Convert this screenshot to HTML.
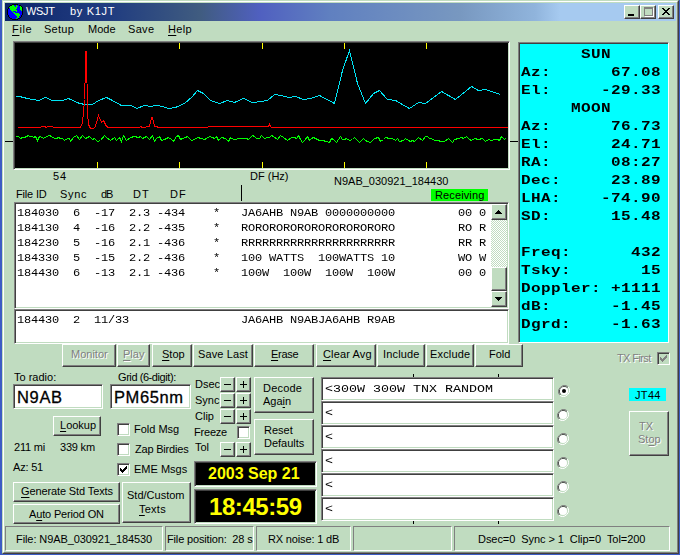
<!DOCTYPE html><html><head><meta charset="utf-8"><style>
html,body{margin:0;padding:0}
body{width:680px;height:555px;overflow:hidden;position:relative;background:#3C5CC4}
.b,.s2,.s1{position:absolute;box-sizing:border-box}
.b{background:#C0DCC0;border:1px solid;border-color:#fff #404040 #404040 #fff;box-shadow:inset -1px -1px #808080}
.s2{border:1px solid;border-color:#808080 #fff #fff #808080;box-shadow:inset 1px 1px #404040,inset -1px -1px #C0DCC0}
.s1{border:1px solid;border-color:#808080 #fff #fff #808080}
.t,.tr16,.tb16,.tb24,.m12,.mb14,.m11{position:absolute;white-space:pre;color:#000}
.t{font:11px/11px "Liberation Sans",sans-serif}
.tr16{font:16.5px/16px "Liberation Sans",sans-serif;-webkit-text-stroke:0.3px #000}
.tb16{font:bold 16px/16px "Liberation Sans",sans-serif}
.tb24{font:bold 24px/24px "Liberation Sans",sans-serif}
.m12{font:12px/12px "Liberation Mono",monospace;letter-spacing:-0.2px;transform:scaleY(0.9);transform-origin:0 0}
.mb14{font:bold 16px/16px "Liberation Mono",monospace;letter-spacing:0.4px;transform:scaleY(0.82);transform-origin:0 0}
.m11{font:13.33px/13px "Liberation Mono",monospace;letter-spacing:0px;transform:scaleY(0.8);transform-origin:0 0}
u{text-decoration:underline;text-underline-offset:2px}
</style></head><body><div style="position:absolute;left:2px;top:0;width:677px;height:554px;box-sizing:border-box;background:#C0DCC0;border:1px solid;border-color:#C0DCC0 #404040 #404040 #C0DCC0"><div style="position:absolute;left:0;top:0;right:0;bottom:0;border:1px solid;border-color:#fff #808080 #808080 #fff"></div></div>
<div style="position:absolute;left:5px;top:3px;width:671px;height:18px;background:linear-gradient(to right,#0A246A 0px,#1A3478 60px,#203C80 105px,#405C80 195px,#5060C0 255px,#6080C0 325px,#7898C0 455px,#90B4DC 530px,#A6CAF0 555px,#A6CAF0 671px)"></div>
<svg style="position:absolute;left:7px;top:4px" width="16" height="16" shape-rendering="crispEdges"><rect x="5" y="0" width="1" height="1" fill="#000"/><rect x="6" y="0" width="1" height="1" fill="#000"/><rect x="7" y="0" width="1" height="1" fill="#000"/><rect x="8" y="0" width="1" height="1" fill="#000"/><rect x="9" y="0" width="1" height="1" fill="#000"/><rect x="10" y="0" width="1" height="1" fill="#000"/><rect x="3" y="1" width="1" height="1" fill="#000"/><rect x="4" y="1" width="1" height="1" fill="#000"/><rect x="5" y="1" width="1" height="1" fill="#00FF00"/><rect x="6" y="1" width="1" height="1" fill="#00FF00"/><rect x="7" y="1" width="1" height="1" fill="#0000FF"/><rect x="8" y="1" width="1" height="1" fill="#0000FF"/><rect x="9" y="1" width="1" height="1" fill="#00FF00"/><rect x="10" y="1" width="1" height="1" fill="#0000FF"/><rect x="11" y="1" width="1" height="1" fill="#0000FF"/><rect x="12" y="1" width="1" height="1" fill="#000"/><rect x="13" y="1" width="1" height="1" fill="#000"/><rect x="2" y="2" width="1" height="1" fill="#000"/><rect x="3" y="2" width="1" height="1" fill="#00FF00"/><rect x="4" y="2" width="1" height="1" fill="#00FF00"/><rect x="5" y="2" width="1" height="1" fill="#00FF00"/><rect x="6" y="2" width="1" height="1" fill="#00FF00"/><rect x="7" y="2" width="1" height="1" fill="#00FF00"/><rect x="8" y="2" width="1" height="1" fill="#0000FF"/><rect x="9" y="2" width="1" height="1" fill="#00FF00"/><rect x="10" y="2" width="1" height="1" fill="#00FF00"/><rect x="11" y="2" width="1" height="1" fill="#0000FF"/><rect x="12" y="2" width="1" height="1" fill="#0000FF"/><rect x="13" y="2" width="1" height="1" fill="#00FF00"/><rect x="14" y="2" width="1" height="1" fill="#000"/><rect x="1" y="3" width="1" height="1" fill="#000"/><rect x="2" y="3" width="1" height="1" fill="#00FF00"/><rect x="3" y="3" width="1" height="1" fill="#00FF00"/><rect x="4" y="3" width="1" height="1" fill="#00FF00"/><rect x="5" y="3" width="1" height="1" fill="#00FF00"/><rect x="6" y="3" width="1" height="1" fill="#00FF00"/><rect x="7" y="3" width="1" height="1" fill="#00FF00"/><rect x="8" y="3" width="1" height="1" fill="#00FF00"/><rect x="9" y="3" width="1" height="1" fill="#00FF00"/><rect x="10" y="3" width="1" height="1" fill="#0000FF"/><rect x="11" y="3" width="1" height="1" fill="#0000FF"/><rect x="12" y="3" width="1" height="1" fill="#0000FF"/><rect x="13" y="3" width="1" height="1" fill="#00FF00"/><rect x="14" y="3" width="1" height="1" fill="#00FF00"/><rect x="15" y="3" width="1" height="1" fill="#000"/><rect x="1" y="4" width="1" height="1" fill="#000"/><rect x="2" y="4" width="1" height="1" fill="#0000FF"/><rect x="3" y="4" width="1" height="1" fill="#00FF00"/><rect x="4" y="4" width="1" height="1" fill="#00FF00"/><rect x="5" y="4" width="1" height="1" fill="#00FF00"/><rect x="6" y="4" width="1" height="1" fill="#00FF00"/><rect x="7" y="4" width="1" height="1" fill="#00FF00"/><rect x="8" y="4" width="1" height="1" fill="#00FF00"/><rect x="9" y="4" width="1" height="1" fill="#00FF00"/><rect x="10" y="4" width="1" height="1" fill="#0000FF"/><rect x="11" y="4" width="1" height="1" fill="#0000FF"/><rect x="12" y="4" width="1" height="1" fill="#0000FF"/><rect x="13" y="4" width="1" height="1" fill="#00FF00"/><rect x="14" y="4" width="1" height="1" fill="#00FF00"/><rect x="15" y="4" width="1" height="1" fill="#000"/><rect x="0" y="5" width="1" height="1" fill="#000"/><rect x="1" y="5" width="1" height="1" fill="#0000FF"/><rect x="2" y="5" width="1" height="1" fill="#0000FF"/><rect x="3" y="5" width="1" height="1" fill="#00FF00"/><rect x="4" y="5" width="1" height="1" fill="#00FF00"/><rect x="5" y="5" width="1" height="1" fill="#00FF00"/><rect x="6" y="5" width="1" height="1" fill="#00FF00"/><rect x="7" y="5" width="1" height="1" fill="#00FF00"/><rect x="8" y="5" width="1" height="1" fill="#00FF00"/><rect x="9" y="5" width="1" height="1" fill="#0000FF"/><rect x="10" y="5" width="1" height="1" fill="#0000FF"/><rect x="11" y="5" width="1" height="1" fill="#0000FF"/><rect x="12" y="5" width="1" height="1" fill="#0000FF"/><rect x="13" y="5" width="1" height="1" fill="#00FF00"/><rect x="14" y="5" width="1" height="1" fill="#00FF00"/><rect x="15" y="5" width="1" height="1" fill="#000"/><rect x="0" y="6" width="1" height="1" fill="#000"/><rect x="1" y="6" width="1" height="1" fill="#0000FF"/><rect x="2" y="6" width="1" height="1" fill="#0000FF"/><rect x="3" y="6" width="1" height="1" fill="#0000FF"/><rect x="4" y="6" width="1" height="1" fill="#00FF00"/><rect x="5" y="6" width="1" height="1" fill="#00FF00"/><rect x="6" y="6" width="1" height="1" fill="#00FF00"/><rect x="7" y="6" width="1" height="1" fill="#00FF00"/><rect x="8" y="6" width="1" height="1" fill="#00FF00"/><rect x="9" y="6" width="1" height="1" fill="#00FF00"/><rect x="10" y="6" width="1" height="1" fill="#0000FF"/><rect x="11" y="6" width="1" height="1" fill="#0000FF"/><rect x="12" y="6" width="1" height="1" fill="#0000FF"/><rect x="13" y="6" width="1" height="1" fill="#0000FF"/><rect x="14" y="6" width="1" height="1" fill="#00FF00"/><rect x="15" y="6" width="1" height="1" fill="#000"/><rect x="0" y="7" width="1" height="1" fill="#000"/><rect x="1" y="7" width="1" height="1" fill="#0000FF"/><rect x="2" y="7" width="1" height="1" fill="#0000FF"/><rect x="3" y="7" width="1" height="1" fill="#0000FF"/><rect x="4" y="7" width="1" height="1" fill="#0000FF"/><rect x="5" y="7" width="1" height="1" fill="#00FF00"/><rect x="6" y="7" width="1" height="1" fill="#0000FF"/><rect x="7" y="7" width="1" height="1" fill="#0000FF"/><rect x="8" y="7" width="1" height="1" fill="#0000FF"/><rect x="9" y="7" width="1" height="1" fill="#00FF00"/><rect x="10" y="7" width="1" height="1" fill="#0000FF"/><rect x="11" y="7" width="1" height="1" fill="#0000FF"/><rect x="12" y="7" width="1" height="1" fill="#0000FF"/><rect x="13" y="7" width="1" height="1" fill="#0000FF"/><rect x="14" y="7" width="1" height="1" fill="#0000FF"/><rect x="15" y="7" width="1" height="1" fill="#000"/><rect x="0" y="8" width="1" height="1" fill="#000"/><rect x="1" y="8" width="1" height="1" fill="#0000FF"/><rect x="2" y="8" width="1" height="1" fill="#0000FF"/><rect x="3" y="8" width="1" height="1" fill="#0000FF"/><rect x="4" y="8" width="1" height="1" fill="#0000FF"/><rect x="5" y="8" width="1" height="1" fill="#0000FF"/><rect x="6" y="8" width="1" height="1" fill="#00FF00"/><rect x="7" y="8" width="1" height="1" fill="#00FF00"/><rect x="8" y="8" width="1" height="1" fill="#0000FF"/><rect x="9" y="8" width="1" height="1" fill="#0000FF"/><rect x="10" y="8" width="1" height="1" fill="#0000FF"/><rect x="11" y="8" width="1" height="1" fill="#0000FF"/><rect x="12" y="8" width="1" height="1" fill="#0000FF"/><rect x="13" y="8" width="1" height="1" fill="#0000FF"/><rect x="14" y="8" width="1" height="1" fill="#0000FF"/><rect x="15" y="8" width="1" height="1" fill="#000"/><rect x="0" y="9" width="1" height="1" fill="#000"/><rect x="1" y="9" width="1" height="1" fill="#0000FF"/><rect x="2" y="9" width="1" height="1" fill="#0000FF"/><rect x="3" y="9" width="1" height="1" fill="#0000FF"/><rect x="4" y="9" width="1" height="1" fill="#0000FF"/><rect x="5" y="9" width="1" height="1" fill="#0000FF"/><rect x="6" y="9" width="1" height="1" fill="#0000FF"/><rect x="7" y="9" width="1" height="1" fill="#00FF00"/><rect x="8" y="9" width="1" height="1" fill="#00FF00"/><rect x="9" y="9" width="1" height="1" fill="#00FF00"/><rect x="10" y="9" width="1" height="1" fill="#00FF00"/><rect x="11" y="9" width="1" height="1" fill="#00FF00"/><rect x="12" y="9" width="1" height="1" fill="#0000FF"/><rect x="13" y="9" width="1" height="1" fill="#0000FF"/><rect x="14" y="9" width="1" height="1" fill="#0000FF"/><rect x="15" y="9" width="1" height="1" fill="#000"/><rect x="0" y="10" width="1" height="1" fill="#000"/><rect x="1" y="10" width="1" height="1" fill="#0000FF"/><rect x="2" y="10" width="1" height="1" fill="#0000FF"/><rect x="3" y="10" width="1" height="1" fill="#0000FF"/><rect x="4" y="10" width="1" height="1" fill="#0000FF"/><rect x="5" y="10" width="1" height="1" fill="#0000FF"/><rect x="6" y="10" width="1" height="1" fill="#0000FF"/><rect x="7" y="10" width="1" height="1" fill="#0000FF"/><rect x="8" y="10" width="1" height="1" fill="#00FF00"/><rect x="9" y="10" width="1" height="1" fill="#00FF00"/><rect x="10" y="10" width="1" height="1" fill="#00FF00"/><rect x="11" y="10" width="1" height="1" fill="#00FF00"/><rect x="12" y="10" width="1" height="1" fill="#00FF00"/><rect x="13" y="10" width="1" height="1" fill="#0000FF"/><rect x="14" y="10" width="1" height="1" fill="#0000FF"/><rect x="15" y="10" width="1" height="1" fill="#000"/><rect x="1" y="11" width="1" height="1" fill="#000"/><rect x="2" y="11" width="1" height="1" fill="#0000FF"/><rect x="3" y="11" width="1" height="1" fill="#0000FF"/><rect x="4" y="11" width="1" height="1" fill="#0000FF"/><rect x="5" y="11" width="1" height="1" fill="#0000FF"/><rect x="6" y="11" width="1" height="1" fill="#0000FF"/><rect x="7" y="11" width="1" height="1" fill="#0000FF"/><rect x="8" y="11" width="1" height="1" fill="#0000FF"/><rect x="9" y="11" width="1" height="1" fill="#00FF00"/><rect x="10" y="11" width="1" height="1" fill="#00FF00"/><rect x="11" y="11" width="1" height="1" fill="#00FF00"/><rect x="12" y="11" width="1" height="1" fill="#00FF00"/><rect x="13" y="11" width="1" height="1" fill="#0000FF"/><rect x="14" y="11" width="1" height="1" fill="#000"/><rect x="1" y="12" width="1" height="1" fill="#000"/><rect x="2" y="12" width="1" height="1" fill="#0000FF"/><rect x="3" y="12" width="1" height="1" fill="#0000FF"/><rect x="4" y="12" width="1" height="1" fill="#0000FF"/><rect x="5" y="12" width="1" height="1" fill="#0000FF"/><rect x="6" y="12" width="1" height="1" fill="#0000FF"/><rect x="7" y="12" width="1" height="1" fill="#0000FF"/><rect x="8" y="12" width="1" height="1" fill="#0000FF"/><rect x="9" y="12" width="1" height="1" fill="#0000FF"/><rect x="10" y="12" width="1" height="1" fill="#00FF00"/><rect x="11" y="12" width="1" height="1" fill="#00FF00"/><rect x="12" y="12" width="1" height="1" fill="#0000FF"/><rect x="13" y="12" width="1" height="1" fill="#0000FF"/><rect x="14" y="12" width="1" height="1" fill="#000"/><rect x="2" y="13" width="1" height="1" fill="#000"/><rect x="3" y="13" width="1" height="1" fill="#0000FF"/><rect x="4" y="13" width="1" height="1" fill="#0000FF"/><rect x="5" y="13" width="1" height="1" fill="#0000FF"/><rect x="6" y="13" width="1" height="1" fill="#0000FF"/><rect x="7" y="13" width="1" height="1" fill="#0000FF"/><rect x="8" y="13" width="1" height="1" fill="#0000FF"/><rect x="9" y="13" width="1" height="1" fill="#0000FF"/><rect x="10" y="13" width="1" height="1" fill="#00FF00"/><rect x="11" y="13" width="1" height="1" fill="#00FF00"/><rect x="12" y="13" width="1" height="1" fill="#0000FF"/><rect x="13" y="13" width="1" height="1" fill="#000"/><rect x="3" y="14" width="1" height="1" fill="#000"/><rect x="4" y="14" width="1" height="1" fill="#000"/><rect x="5" y="14" width="1" height="1" fill="#0000FF"/><rect x="6" y="14" width="1" height="1" fill="#0000FF"/><rect x="7" y="14" width="1" height="1" fill="#0000FF"/><rect x="8" y="14" width="1" height="1" fill="#0000FF"/><rect x="9" y="14" width="1" height="1" fill="#00FF00"/><rect x="10" y="14" width="1" height="1" fill="#0000FF"/><rect x="11" y="14" width="1" height="1" fill="#000"/><rect x="12" y="14" width="1" height="1" fill="#000"/><rect x="5" y="15" width="1" height="1" fill="#000"/><rect x="6" y="15" width="1" height="1" fill="#000"/><rect x="7" y="15" width="1" height="1" fill="#000"/><rect x="8" y="15" width="1" height="1" fill="#000"/><rect x="9" y="15" width="1" height="1" fill="#000"/><rect x="10" y="15" width="1" height="1" fill="#000"/></svg>
<div class="t" style="left:26px;top:6px;letter-spacing:-0.333px;color:#fff;">WSJT</div>
<div class="t" style="left:70px;top:6px;letter-spacing:0.667px;color:#fff;">by K1JT</div>
<div class="b" style="left:624px;top:5px;width:16px;height:14px;"></div>
<div class="b" style="left:640px;top:5px;width:16px;height:14px;"></div>
<div class="b" style="left:658px;top:5px;width:16px;height:14px;"></div>
<div style="position:absolute;left:628px;top:14px;width:6px;height:2px;background:#000"></div>
<div style="position:absolute;left:644px;top:7px;width:9px;height:9px;box-sizing:border-box;border:1px solid #808080;border-top-width:2px;box-shadow:1px 1px #fff"></div>
<svg style="position:absolute;left:662px;top:8px" width="8" height="7" shape-rendering="crispEdges"><rect x="0" y="0" width="1" height="1" fill="#000"/><rect x="1" y="0" width="1" height="1" fill="#000"/><rect x="6" y="0" width="1" height="1" fill="#000"/><rect x="7" y="0" width="1" height="1" fill="#000"/><rect x="1" y="1" width="1" height="1" fill="#000"/><rect x="2" y="1" width="1" height="1" fill="#000"/><rect x="5" y="1" width="1" height="1" fill="#000"/><rect x="6" y="1" width="1" height="1" fill="#000"/><rect x="2" y="2" width="1" height="1" fill="#000"/><rect x="3" y="2" width="1" height="1" fill="#000"/><rect x="4" y="2" width="1" height="1" fill="#000"/><rect x="5" y="2" width="1" height="1" fill="#000"/><rect x="3" y="3" width="1" height="1" fill="#000"/><rect x="4" y="3" width="1" height="1" fill="#000"/><rect x="2" y="4" width="1" height="1" fill="#000"/><rect x="3" y="4" width="1" height="1" fill="#000"/><rect x="4" y="4" width="1" height="1" fill="#000"/><rect x="5" y="4" width="1" height="1" fill="#000"/><rect x="1" y="5" width="1" height="1" fill="#000"/><rect x="2" y="5" width="1" height="1" fill="#000"/><rect x="5" y="5" width="1" height="1" fill="#000"/><rect x="6" y="5" width="1" height="1" fill="#000"/><rect x="0" y="6" width="1" height="1" fill="#000"/><rect x="1" y="6" width="1" height="1" fill="#000"/><rect x="6" y="6" width="1" height="1" fill="#000"/><rect x="7" y="6" width="1" height="1" fill="#000"/></svg>
<div class="t" style="left:12px;top:24px;letter-spacing:0.667px;"><u>F</u>ile</div>
<div class="t" style="left:44px;top:24px;letter-spacing:0.250px;">Setup</div>
<div class="t" style="left:88px;top:24px;">Mode</div>
<div class="t" style="left:128px;top:24px;letter-spacing:0.333px;">Save</div>
<div class="t" style="left:168px;top:24px;letter-spacing:0.333px;"><u>H</u>elp</div>
<div class="s2" style="left:13px;top:41px;width:497px;height:129px;background:#000;"></div>
<svg style="position:absolute;left:0;top:0" width="680" height="555"><rect x="97" y="43" width="1" height="6" fill="#FFFF00"/><rect x="97" y="162" width="1" height="6" fill="#FFFF00"/><rect x="179" y="43" width="1" height="6" fill="#FFFF00"/><rect x="179" y="162" width="1" height="6" fill="#FFFF00"/><rect x="262" y="43" width="1" height="6" fill="#FFFF00"/><rect x="262" y="162" width="1" height="6" fill="#FFFF00"/><rect x="344" y="43" width="1" height="6" fill="#FFFF00"/><rect x="344" y="162" width="1" height="6" fill="#FFFF00"/><rect x="426" y="43" width="1" height="6" fill="#FFFF00"/><rect x="426" y="162" width="1" height="6" fill="#FFFF00"/><rect x="5" y="141" width="8" height="1" fill="#000"/><rect x="510" y="141" width="8" height="1" fill="#000"/><polyline points="15.5,96.5 19.5,96.5 27.5,98.5 38.5,100.5 45.5,97.5 52.5,100.5 62.5,100.5 68.5,98.5 79.5,103.5 85.5,104.5 92.5,104.5 98.5,100.5 106.5,97.5 110.5,99.5 121.5,105.5 131.5,105.5 136.5,108.5 144.5,105.5 150.5,106.5 156.5,105.5 162.5,106.5 168.5,108.5 175.5,107.5 184.5,103.5 192.5,96.5 197.5,90.5 203.5,93.5 210.5,100.5 219.5,103.5 227.5,100.5 234.5,102.5 243.5,98.5 252.5,102.5 261.5,101.5 267.5,100.5 274.5,94.5 281.5,95.5 288.5,97.5 295.5,96.5 303.5,99.5 310.5,98.5 319.5,95.5 334.5,103.5 342.5,70.5 349.5,50.5 357.5,83.5 365.5,103.5 373.5,93.5 379.5,90.5 387.5,99.5 395.5,100.5 409.5,108.5 418.5,102.5 425.5,103.5 441.5,91.5 455.5,99.5 471.5,86.5 478.5,90.5 485.5,89.5 500.5,94.5" fill="none" stroke="#00E4F4" stroke-width="1" shape-rendering="crispEdges"/><polyline points="15.5,136.5 18.5,136.5 20.5,138.5 22.5,137.5 24.5,137.5 26.5,136.5 28.5,135.5 29.5,136.5 32.5,136.5 33.5,137.5 35.5,136.5 37.5,140.5 39.5,136.5 42.5,137.5 43.5,138.5 46.5,136.5 49.5,135.5 51.5,136.5 54.5,138.5 56.5,138.5 58.5,137.5 60.5,138.5 62.5,138.5 64.5,140.5 67.5,138.5 69.5,138.5 70.5,141.5 73.5,137.5 76.5,135.5 79.5,139.5 82.5,135.5 85.5,138.5 87.5,137.5 89.5,136.5 92.5,139.5 94.5,138.5 97.5,141.5 100.5,140.5 104.5,135.5 106.5,137.5 110.5,140.5 114.5,137.5 116.5,140.5 119.5,137.5 121.5,141.5 123.5,135.5 126.5,140.5 130.5,137.5 134.5,136.5 138.5,137.5 140.5,136.5 142.5,138.5 146.5,136.5 149.5,139.5 152.5,135.5 154.5,141.5 156.5,138.5 159.5,136.5 161.5,140.5 164.5,139.5 168.5,137.5 171.5,139.5 173.5,141.5 176.5,136.5 178.5,135.5 180.5,139.5 182.5,138.5 185.5,137.5 187.5,136.5 189.5,138.5 191.5,140.5 194.5,139.5 197.5,137.5 201.5,138.5 204.5,139.5 206.5,138.5 209.5,136.5 212.5,137.5 214.5,138.5 216.5,136.5 218.5,140.5 221.5,137.5 225.5,138.5 228.5,141.5 230.5,137.5 233.5,139.5 235.5,139.5 238.5,138.5 240.5,138.5 244.5,138.5 246.5,138.5 248.5,139.5 252.5,135.5 254.5,136.5 256.5,138.5 259.5,138.5 261.5,135.5 264.5,138.5 267.5,137.5 269.5,137.5 271.5,135.5 273.5,136.5 277.5,139.5 280.5,135.5 283.5,137.5 287.5,140.5 291.5,137.5 294.5,137.5 296.5,138.5 298.5,135.5 300.5,139.5 302.5,142.5 304.5,140.5 307.5,136.5 309.5,140.5 311.5,138.5 313.5,137.5 317.5,139.5 319.5,140.5 322.5,140.5 326.5,141.5 329.5,142.5 331.5,138.5 333.5,139.5 336.5,142.5 340.5,136.5 342.5,139.5 344.5,139.5 346.5,138.5 349.5,140.5 352.5,139.5 354.5,137.5 356.5,139.5 359.5,142.5 363.5,138.5 365.5,140.5 367.5,141.5 370.5,142.5 374.5,138.5 378.5,137.5 380.5,141.5 383.5,139.5 385.5,137.5 389.5,138.5 392.5,138.5 395.5,140.5 397.5,138.5 399.5,141.5 403.5,140.5 405.5,138.5 408.5,140.5 410.5,141.5 412.5,140.5 414.5,141.5 418.5,137.5 422.5,140.5 425.5,136.5 427.5,136.5 429.5,138.5 431.5,138.5 434.5,140.5 437.5,140.5 441.5,141.5 444.5,141.5 448.5,138.5 452.5,142.5 454.5,139.5 458.5,138.5 461.5,137.5 463.5,138.5 466.5,136.5 469.5,139.5 471.5,140.5 474.5,138.5 478.5,139.5 482.5,138.5 485.5,141.5 488.5,139.5 491.5,140.5 494.5,139.5 497.5,139.5 499.5,140.5 501.5,136.5 504.5,139.5 505.5,138.5" fill="none" stroke="#00FF00" stroke-width="1" shape-rendering="crispEdges"/><polyline points="17.5,127.5 40.5,127.5 41.5,126.5 44.5,126.5 46.5,127.5 47.5,126.5 52.5,126.5 53.5,127.5 80.5,127.5 82.5,122.5 83.5,112.5 84.5,99.5 85.5,67.5 85.5,51.5 86.5,51.5 86.5,67.5 87.5,99.5 87.5,112.5 88.5,124.5 90.5,128.5 93.5,128.5 95.5,126.5 96.5,122.5 98.5,115.5 101.5,122.5 103.5,120.5 106.5,126.5 108.5,127.5 139.5,127.5 140.5,126.5 142.5,127.5 149.5,126.5 151.5,117.5 152.5,117.5 154.5,126.5 156.5,126.5 158.5,127.5 207.5,127.5 208.5,126.5 268.5,126.5 269.5,124.5 270.5,126.5 271.5,127.5 507.5,127.5" fill="none" stroke="#FF0000" stroke-width="1" shape-rendering="crispEdges"/></svg>
<div class="t" style="left:53px;top:171px;letter-spacing:1.000px;">54</div>
<div class="t" style="left:250px;top:171px;">DF (Hz)</div>
<div class="t" style="left:334px;top:176px;">N9AB_030921_184430</div>
<div class="t" style="left:16px;top:189px;letter-spacing:-0.167px;">File ID</div>
<div class="t" style="left:60px;top:189px;letter-spacing:0.667px;">Sync</div>
<div class="t" style="left:101px;top:189px;letter-spacing:-1.000px;">dB</div>
<div class="t" style="left:133px;top:189px;letter-spacing:1.000px;">DT</div>
<div class="t" style="left:170px;top:189px;letter-spacing:1.000px;">DF</div>
<div style="position:absolute;left:241px;top:185px;width:1px;height:16px;background:#000"></div>
<div style="position:absolute;left:431px;top:189px;width:57px;height:12px;background:#00FF00"></div>
<div class="t" style="left:435px;top:190px;letter-spacing:0.125px;">Receiving</div>
<div class="s2" style="left:14px;top:202px;width:495px;height:107px;background:#fff;"></div>
<div class="m12" style="left:17px;top:208px;">184030&nbsp;&nbsp;6&nbsp;&nbsp;-17&nbsp;&nbsp;2.3&nbsp;-434&nbsp;&nbsp;&nbsp;&nbsp;*&nbsp;&nbsp;&nbsp;JA6AHB&nbsp;N9AB&nbsp;0000000000&nbsp;&nbsp;&nbsp;&nbsp;&nbsp;&nbsp;&nbsp;&nbsp;&nbsp;00&nbsp;0</div>
<div class="m12" style="left:17px;top:223px;">184130&nbsp;&nbsp;4&nbsp;&nbsp;-16&nbsp;&nbsp;2.2&nbsp;-435&nbsp;&nbsp;&nbsp;&nbsp;*&nbsp;&nbsp;&nbsp;RORORORORORORORORORORO&nbsp;&nbsp;&nbsp;&nbsp;&nbsp;&nbsp;&nbsp;&nbsp;&nbsp;RO&nbsp;R</div>
<div class="m12" style="left:17px;top:238px;">184230&nbsp;&nbsp;5&nbsp;&nbsp;-16&nbsp;&nbsp;2.1&nbsp;-436&nbsp;&nbsp;&nbsp;&nbsp;*&nbsp;&nbsp;&nbsp;RRRRRRRRRRRRRRRRRRRRRR&nbsp;&nbsp;&nbsp;&nbsp;&nbsp;&nbsp;&nbsp;&nbsp;&nbsp;RR&nbsp;R</div>
<div class="m12" style="left:17px;top:253px;">184330&nbsp;&nbsp;5&nbsp;&nbsp;-15&nbsp;&nbsp;2.2&nbsp;-436&nbsp;&nbsp;&nbsp;&nbsp;*&nbsp;&nbsp;&nbsp;100&nbsp;WATTS&nbsp;&nbsp;100WATTS&nbsp;10&nbsp;&nbsp;&nbsp;&nbsp;&nbsp;&nbsp;&nbsp;&nbsp;&nbsp;WO&nbsp;W</div>
<div class="m12" style="left:17px;top:268px;">184430&nbsp;&nbsp;6&nbsp;&nbsp;-13&nbsp;&nbsp;2.1&nbsp;-436&nbsp;&nbsp;&nbsp;&nbsp;*&nbsp;&nbsp;&nbsp;100W&nbsp;&nbsp;100W&nbsp;&nbsp;100W&nbsp;&nbsp;100W&nbsp;&nbsp;&nbsp;&nbsp;&nbsp;&nbsp;&nbsp;&nbsp;&nbsp;00&nbsp;0</div>
<div style="position:absolute;left:491px;top:220px;width:16px;height:47px;background-color:#fff;background-image:linear-gradient(45deg,#C0DCC0 25%,transparent 25%,transparent 75%,#C0DCC0 75%),linear-gradient(45deg,#C0DCC0 25%,transparent 25%,transparent 75%,#C0DCC0 75%);background-size:2px 2px;background-position:0 0,1px 1px"></div>
<div class="b" style="left:491px;top:204px;width:16px;height:16px;"></div>
<div class="b" style="left:491px;top:267px;width:16px;height:24px;"></div>
<div class="b" style="left:491px;top:291px;width:16px;height:16px;"></div>
<svg style="position:absolute;left:0;top:0" width="680" height="555" shape-rendering="crispEdges"><rect x="498" y="210" width="1" height="1"/><rect x="497" y="211" width="3" height="1"/><rect x="496" y="212" width="5" height="1"/><rect x="495" y="213" width="7" height="1"/><rect x="495" y="297" width="7" height="1"/><rect x="496" y="298" width="5" height="1"/><rect x="497" y="299" width="3" height="1"/><rect x="498" y="300" width="1" height="1"/></svg>
<div class="s2" style="left:14px;top:309px;width:495px;height:35px;background:#fff;"></div>
<div class="m12" style="left:17px;top:315px;">184430&nbsp;&nbsp;2&nbsp;&nbsp;11/33&nbsp;&nbsp;&nbsp;&nbsp;&nbsp;&nbsp;&nbsp;&nbsp;&nbsp;&nbsp;&nbsp;&nbsp;&nbsp;&nbsp;&nbsp;&nbsp;JA6AHB&nbsp;N9ABJA6AHB&nbsp;R9AB</div>
<div style="position:absolute;left:518px;top:42px;width:151px;height:301px;box-sizing:border-box;background:#00FFFF;border:1px solid;border-color:#808080 #fff #fff #808080;box-shadow:inset 1px 1px #404040"></div>
<div class="mb14" style="left:521px;top:48px;">&nbsp;&nbsp;&nbsp;&nbsp;&nbsp;&nbsp;SUN</div>
<div class="mb14" style="left:521px;top:66px;">Az:&nbsp;&nbsp;&nbsp;&nbsp;&nbsp;&nbsp;67.08</div>
<div class="mb14" style="left:521px;top:84px;">El:&nbsp;&nbsp;&nbsp;&nbsp;&nbsp;-29.33</div>
<div class="mb14" style="left:521px;top:102px;">&nbsp;&nbsp;&nbsp;&nbsp;&nbsp;MOON</div>
<div class="mb14" style="left:521px;top:120px;">Az:&nbsp;&nbsp;&nbsp;&nbsp;&nbsp;&nbsp;76.73</div>
<div class="mb14" style="left:521px;top:138px;">El:&nbsp;&nbsp;&nbsp;&nbsp;&nbsp;&nbsp;24.71</div>
<div class="mb14" style="left:521px;top:156px;">RA:&nbsp;&nbsp;&nbsp;&nbsp;&nbsp;&nbsp;08:27</div>
<div class="mb14" style="left:521px;top:174px;">Dec:&nbsp;&nbsp;&nbsp;&nbsp;&nbsp;23.89</div>
<div class="mb14" style="left:521px;top:192px;">LHA:&nbsp;&nbsp;&nbsp;&nbsp;-74.90</div>
<div class="mb14" style="left:521px;top:210px;">SD:&nbsp;&nbsp;&nbsp;&nbsp;&nbsp;&nbsp;15.48</div>
<div class="mb14" style="left:521px;top:246px;">Freq:&nbsp;&nbsp;&nbsp;&nbsp;&nbsp;&nbsp;432</div>
<div class="mb14" style="left:521px;top:264px;">Tsky:&nbsp;&nbsp;&nbsp;&nbsp;&nbsp;&nbsp;&nbsp;15</div>
<div class="mb14" style="left:521px;top:282px;">Doppler:&nbsp;+1111</div>
<div class="mb14" style="left:521px;top:300px;">dB:&nbsp;&nbsp;&nbsp;&nbsp;&nbsp;&nbsp;-1.45</div>
<div class="mb14" style="left:521px;top:318px;">Dgrd:&nbsp;&nbsp;&nbsp;&nbsp;-1.63</div>
<div class="b" style="left:62px;top:344px;width:54px;height:23px;"></div>
<div class="t" style="left:71px;top:349px;color:#808080;text-shadow:1px 1px #fff;">Monitor</div>
<div class="b" style="left:117px;top:344px;width:33px;height:23px;"></div>
<div class="t" style="left:123px;top:349px;color:#808080;text-shadow:1px 1px #fff;"><u>P</u>lay</div>
<div class="b" style="left:152px;top:344px;width:40px;height:23px;"></div>
<div class="t" style="left:162px;top:349px;"><u>S</u>top</div>
<div class="b" style="left:193px;top:344px;width:60px;height:23px;"></div>
<div class="t" style="left:198px;top:349px;letter-spacing:0.125px;">Save Last</div>
<div class="b" style="left:254px;top:344px;width:60px;height:23px;"></div>
<div class="t" style="left:271px;top:349px;letter-spacing:-0.250px;"><u>E</u>rase</div>
<div class="b" style="left:316px;top:344px;width:60px;height:23px;"></div>
<div class="t" style="left:323px;top:349px;letter-spacing:0.125px;"><u>C</u>lear Avg</div>
<div class="b" style="left:377px;top:344px;width:48px;height:23px;"></div>
<div class="t" style="left:383px;top:349px;letter-spacing:0.167px;">Include</div>
<div class="b" style="left:426px;top:344px;width:48px;height:23px;"></div>
<div class="t" style="left:430px;top:349px;letter-spacing:0.167px;">Exclude</div>
<div class="b" style="left:475px;top:344px;width:48px;height:23px;"></div>
<div class="t" style="left:489px;top:349px;">Fold</div>
<div class="t" style="left:617px;top:353px;letter-spacing:-0.600px;color:#808080;text-shadow:1px 1px #fff;">TX First</div>
<div class="s2" style="left:657px;top:352px;width:13px;height:13px;background:#C0DCC0;"></div>
<svg style="position:absolute;left:660px;top:355px" width="7" height="7" shape-rendering="crispEdges"><rect x="6" y="0" width="1" height="1" fill="#808080"/><rect x="5" y="1" width="1" height="1" fill="#808080"/><rect x="6" y="1" width="1" height="1" fill="#808080"/><rect x="0" y="2" width="1" height="1" fill="#808080"/><rect x="4" y="2" width="1" height="1" fill="#808080"/><rect x="5" y="2" width="1" height="1" fill="#808080"/><rect x="6" y="2" width="1" height="1" fill="#808080"/><rect x="0" y="3" width="1" height="1" fill="#808080"/><rect x="1" y="3" width="1" height="1" fill="#808080"/><rect x="3" y="3" width="1" height="1" fill="#808080"/><rect x="4" y="3" width="1" height="1" fill="#808080"/><rect x="5" y="3" width="1" height="1" fill="#808080"/><rect x="0" y="4" width="1" height="1" fill="#808080"/><rect x="1" y="4" width="1" height="1" fill="#808080"/><rect x="2" y="4" width="1" height="1" fill="#808080"/><rect x="3" y="4" width="1" height="1" fill="#808080"/><rect x="4" y="4" width="1" height="1" fill="#808080"/><rect x="1" y="5" width="1" height="1" fill="#808080"/><rect x="2" y="5" width="1" height="1" fill="#808080"/><rect x="3" y="5" width="1" height="1" fill="#808080"/><rect x="2" y="6" width="1" height="1" fill="#808080"/></svg>
<div class="t" style="left:14px;top:372px;">To radio:</div>
<div class="s2" style="left:13px;top:384px;width:90px;height:25px;background:#fff;"></div>
<div class="tr16" style="left:17px;top:389px;letter-spacing:0.667px;">N9AB</div>
<div class="t" style="left:118px;top:372px;letter-spacing:-0.428px;">Grid (6-digit):</div>
<div class="s2" style="left:110px;top:384px;width:81px;height:25px;background:#fff;"></div>
<div class="tr16" style="left:114px;top:389px;letter-spacing:0.600px;">PM65nm</div>
<div style="position:absolute;left:190px;top:377px;width:30px;height:16px;overflow:hidden">
<div class="t" style="left:5px;top:2px;">Dsec</div>
</div>
<div class="b" style="left:220px;top:377px;width:15px;height:15px;"></div>
<div class="b" style="left:236px;top:377px;width:15px;height:15px;"></div>
<div style="position:absolute;left:224px;top:384px;width:7px;height:1px;background:#000"></div>
<div style="position:absolute;left:240px;top:384px;width:7px;height:1px;background:#000"></div>
<div style="position:absolute;left:243px;top:381px;width:1px;height:7px;background:#000"></div>
<div style="position:absolute;left:190px;top:393px;width:30px;height:16px;overflow:hidden">
<div class="t" style="left:5px;top:2px;">Sync</div>
</div>
<div class="b" style="left:220px;top:393px;width:15px;height:15px;"></div>
<div class="b" style="left:236px;top:393px;width:15px;height:15px;"></div>
<div style="position:absolute;left:224px;top:400px;width:7px;height:1px;background:#000"></div>
<div style="position:absolute;left:240px;top:400px;width:7px;height:1px;background:#000"></div>
<div style="position:absolute;left:243px;top:397px;width:1px;height:7px;background:#000"></div>
<div style="position:absolute;left:190px;top:409px;width:30px;height:16px;overflow:hidden">
<div class="t" style="left:5px;top:2px;">Clip</div>
</div>
<div class="b" style="left:220px;top:409px;width:15px;height:15px;"></div>
<div class="b" style="left:236px;top:409px;width:15px;height:15px;"></div>
<div style="position:absolute;left:224px;top:416px;width:7px;height:1px;background:#000"></div>
<div style="position:absolute;left:240px;top:416px;width:7px;height:1px;background:#000"></div>
<div style="position:absolute;left:243px;top:413px;width:1px;height:7px;background:#000"></div>
<div style="position:absolute;left:190px;top:442px;width:30px;height:16px;overflow:hidden">
<div class="t" style="left:5px;top:0px;">Tol</div>
</div>
<div class="b" style="left:220px;top:442px;width:15px;height:15px;"></div>
<div class="b" style="left:236px;top:442px;width:15px;height:15px;"></div>
<div style="position:absolute;left:224px;top:449px;width:7px;height:1px;background:#000"></div>
<div style="position:absolute;left:240px;top:449px;width:7px;height:1px;background:#000"></div>
<div style="position:absolute;left:243px;top:446px;width:1px;height:7px;background:#000"></div>
<div class="t" style="left:194px;top:427px;letter-spacing:-0.200px;">Freeze</div>
<div class="s2" style="left:237px;top:426px;width:13px;height:13px;background:#fff;"></div>
<div class="b" style="left:254px;top:377px;width:60px;height:36px;"></div>
<div class="t" style="left:263px;top:383px;letter-spacing:0.200px;">Decode</div>
<div class="t" style="left:263px;top:396px;">Aga<u>i</u>n</div>
<div class="b" style="left:254px;top:419px;width:60px;height:36px;"></div>
<div class="t" style="left:264px;top:425px;">Reset</div>
<div class="t" style="left:264px;top:438px;">Defaults</div>
<div class="b" style="left:53px;top:416px;width:48px;height:20px;"></div>
<div class="t" style="left:60px;top:420px;"><u>L</u>ookup</div>
<div class="t" style="left:14px;top:442px;letter-spacing:-0.200px;">211 mi</div>
<div class="t" style="left:60px;top:442px;letter-spacing:-0.200px;">339 km</div>
<div class="t" style="left:13px;top:462px;letter-spacing:-0.200px;">Az: 51</div>
<div class="s2" style="left:117px;top:423px;width:13px;height:13px;background:#fff;"></div>
<div class="t" style="left:134px;top:424px;">Fold Msg</div>
<div class="s2" style="left:117px;top:443px;width:13px;height:13px;background:#fff;"></div>
<div class="t" style="left:135px;top:444px;letter-spacing:-0.200px;">Zap Birdies</div>
<div class="s2" style="left:117px;top:463px;width:13px;height:13px;background:#fff;"></div>
<svg style="position:absolute;left:120px;top:466px" width="7" height="7" shape-rendering="crispEdges"><rect x="6" y="0" width="1" height="1" fill="#000"/><rect x="5" y="1" width="1" height="1" fill="#000"/><rect x="6" y="1" width="1" height="1" fill="#000"/><rect x="0" y="2" width="1" height="1" fill="#000"/><rect x="4" y="2" width="1" height="1" fill="#000"/><rect x="5" y="2" width="1" height="1" fill="#000"/><rect x="6" y="2" width="1" height="1" fill="#000"/><rect x="0" y="3" width="1" height="1" fill="#000"/><rect x="1" y="3" width="1" height="1" fill="#000"/><rect x="3" y="3" width="1" height="1" fill="#000"/><rect x="4" y="3" width="1" height="1" fill="#000"/><rect x="5" y="3" width="1" height="1" fill="#000"/><rect x="0" y="4" width="1" height="1" fill="#000"/><rect x="1" y="4" width="1" height="1" fill="#000"/><rect x="2" y="4" width="1" height="1" fill="#000"/><rect x="3" y="4" width="1" height="1" fill="#000"/><rect x="4" y="4" width="1" height="1" fill="#000"/><rect x="1" y="5" width="1" height="1" fill="#000"/><rect x="2" y="5" width="1" height="1" fill="#000"/><rect x="3" y="5" width="1" height="1" fill="#000"/><rect x="2" y="6" width="1" height="1" fill="#000"/></svg>
<div class="t" style="left:134px;top:464px;">EME Msgs</div>
<div class="s2" style="left:194px;top:461px;width:123px;height:26px;background:#000;"></div>
<div class="tb16" style="left:208px;top:466px;color:#FFFF00;">2003 Sep 21</div>
<div class="s2" style="left:194px;top:489px;width:123px;height:35px;background:#000;"></div>
<div class="tb24" style="left:209px;top:495px;letter-spacing:-0.429px;color:#FFFF00;">18:45:59</div>
<div class="b" style="left:13px;top:482px;width:107px;height:20px;"></div>
<div class="t" style="left:21px;top:486px;letter-spacing:-0.118px;"><u>G</u>enerate Std Texts</div>
<div class="b" style="left:13px;top:504px;width:107px;height:20px;"></div>
<div class="t" style="left:29px;top:509px;letter-spacing:-0.154px;">A<u>u</u>to Period ON</div>
<div class="b" style="left:122px;top:482px;width:69px;height:41px;"></div>
<div class="t" style="left:127px;top:490px;">Std/Custom</div>
<div class="t" style="left:139px;top:504px;letter-spacing:0.250px;"><u>T</u>exts</div>
<div class="s2" style="left:321px;top:377px;width:233px;height:24px;background:#fff;"></div>
<div class="m11" style="left:325px;top:384px;">&lt;300W&nbsp;300W&nbsp;TNX&nbsp;RANDOM</div>
<div class="s2" style="left:321px;top:401px;width:233px;height:24px;background:#fff;"></div>
<div class="m11" style="left:325px;top:408px;">&lt;</div>
<div class="s2" style="left:321px;top:425px;width:233px;height:24px;background:#fff;"></div>
<div class="m11" style="left:325px;top:432px;">&lt;</div>
<div class="s2" style="left:321px;top:449px;width:233px;height:24px;background:#fff;"></div>
<div class="m11" style="left:325px;top:456px;">&lt;</div>
<div class="s2" style="left:321px;top:473px;width:233px;height:24px;background:#fff;"></div>
<div class="m11" style="left:325px;top:480px;">&lt;</div>
<div class="s2" style="left:321px;top:497px;width:233px;height:24px;background:#fff;"></div>
<div class="m11" style="left:325px;top:504px;">&lt;</div>
<div style="position:absolute;left:413px;top:374px;width:1px;height:3px;background:#000"></div>
<div style="position:absolute;left:413px;top:521px;width:1px;height:3px;background:#000"></div>
<div style="position:absolute;left:498px;top:374px;width:1px;height:3px;background:#000"></div>
<div style="position:absolute;left:498px;top:521px;width:1px;height:3px;background:#000"></div>
<svg style="position:absolute;left:558px;top:385px" width="12" height="12" viewBox="0 0 12 12"><path d="M10.2 1.8 A6 6 0 0 0 1.8 10.2" stroke="#808080" fill="none"/><path d="M9.5 2.5 A5 5 0 0 0 2.5 9.5" stroke="#404040" fill="none"/><path d="M1.8 10.2 A6 6 0 0 0 10.2 1.8" stroke="#fff" fill="none"/><circle cx="6" cy="6" r="4" fill="#fff"/><circle cx="6" cy="6" r="2" fill="#000"/></svg>
<svg style="position:absolute;left:557px;top:409px" width="12" height="12" viewBox="0 0 12 12"><path d="M10.2 1.8 A6 6 0 0 0 1.8 10.2" stroke="#808080" fill="none"/><path d="M9.5 2.5 A5 5 0 0 0 2.5 9.5" stroke="#404040" fill="none"/><path d="M1.8 10.2 A6 6 0 0 0 10.2 1.8" stroke="#fff" fill="none"/><circle cx="6" cy="6" r="4" fill="#fff"/></svg>
<svg style="position:absolute;left:557px;top:433px" width="12" height="12" viewBox="0 0 12 12"><path d="M10.2 1.8 A6 6 0 0 0 1.8 10.2" stroke="#808080" fill="none"/><path d="M9.5 2.5 A5 5 0 0 0 2.5 9.5" stroke="#404040" fill="none"/><path d="M1.8 10.2 A6 6 0 0 0 10.2 1.8" stroke="#fff" fill="none"/><circle cx="6" cy="6" r="4" fill="#fff"/></svg>
<svg style="position:absolute;left:557px;top:457px" width="12" height="12" viewBox="0 0 12 12"><path d="M10.2 1.8 A6 6 0 0 0 1.8 10.2" stroke="#808080" fill="none"/><path d="M9.5 2.5 A5 5 0 0 0 2.5 9.5" stroke="#404040" fill="none"/><path d="M1.8 10.2 A6 6 0 0 0 10.2 1.8" stroke="#fff" fill="none"/><circle cx="6" cy="6" r="4" fill="#fff"/></svg>
<svg style="position:absolute;left:557px;top:481px" width="12" height="12" viewBox="0 0 12 12"><path d="M10.2 1.8 A6 6 0 0 0 1.8 10.2" stroke="#808080" fill="none"/><path d="M9.5 2.5 A5 5 0 0 0 2.5 9.5" stroke="#404040" fill="none"/><path d="M1.8 10.2 A6 6 0 0 0 10.2 1.8" stroke="#fff" fill="none"/><circle cx="6" cy="6" r="4" fill="#fff"/></svg>
<svg style="position:absolute;left:557px;top:505px" width="12" height="12" viewBox="0 0 12 12"><path d="M10.2 1.8 A6 6 0 0 0 1.8 10.2" stroke="#808080" fill="none"/><path d="M9.5 2.5 A5 5 0 0 0 2.5 9.5" stroke="#404040" fill="none"/><path d="M1.8 10.2 A6 6 0 0 0 10.2 1.8" stroke="#fff" fill="none"/><circle cx="6" cy="6" r="4" fill="#fff"/></svg>
<div style="position:absolute;left:629px;top:388px;width:37px;height:13px;background:#00FFFF"></div>
<div class="t" style="left:635px;top:390px;letter-spacing:0.333px;">JT44</div>
<div class="b" style="left:629px;top:411px;width:40px;height:45px;"></div>
<div class="t" style="left:639px;top:421px;color:#808080;text-shadow:1px 1px #fff;">TX</div>
<div class="t" style="left:638px;top:434px;color:#808080;text-shadow:1px 1px #fff;">St<u>o</u>p</div>
<div class="s1" style="left:5px;top:526px;width:158px;height:25px;background:#C0DCC0;"></div>
<div class="s1" style="left:165px;top:526px;width:89px;height:25px;background:#C0DCC0;"></div>
<div class="s1" style="left:256px;top:526px;width:95px;height:25px;background:#C0DCC0;"></div>
<div class="s1" style="left:353px;top:526px;width:99px;height:25px;background:#C0DCC0;"></div>
<div class="s1" style="left:454px;top:526px;width:216px;height:25px;background:#C0DCC0;"></div>
<div class="t" style="left:16px;top:534px;letter-spacing:-0.087px;">File: N9AB_030921_184530</div>
<div class="t" style="left:167px;top:534px;letter-spacing:-0.157px;">File position:&nbsp;&nbsp;28 s</div>
<div class="t" style="left:268px;top:534px;letter-spacing:-0.154px;">RX noise: 1 dB</div>
<div class="t" style="left:478px;top:534px;letter-spacing:-0.062px;">Dsec=0&nbsp;&nbsp;Sync &gt; 1&nbsp;&nbsp;Clip=0&nbsp;&nbsp;Tol=200</div></body></html>
